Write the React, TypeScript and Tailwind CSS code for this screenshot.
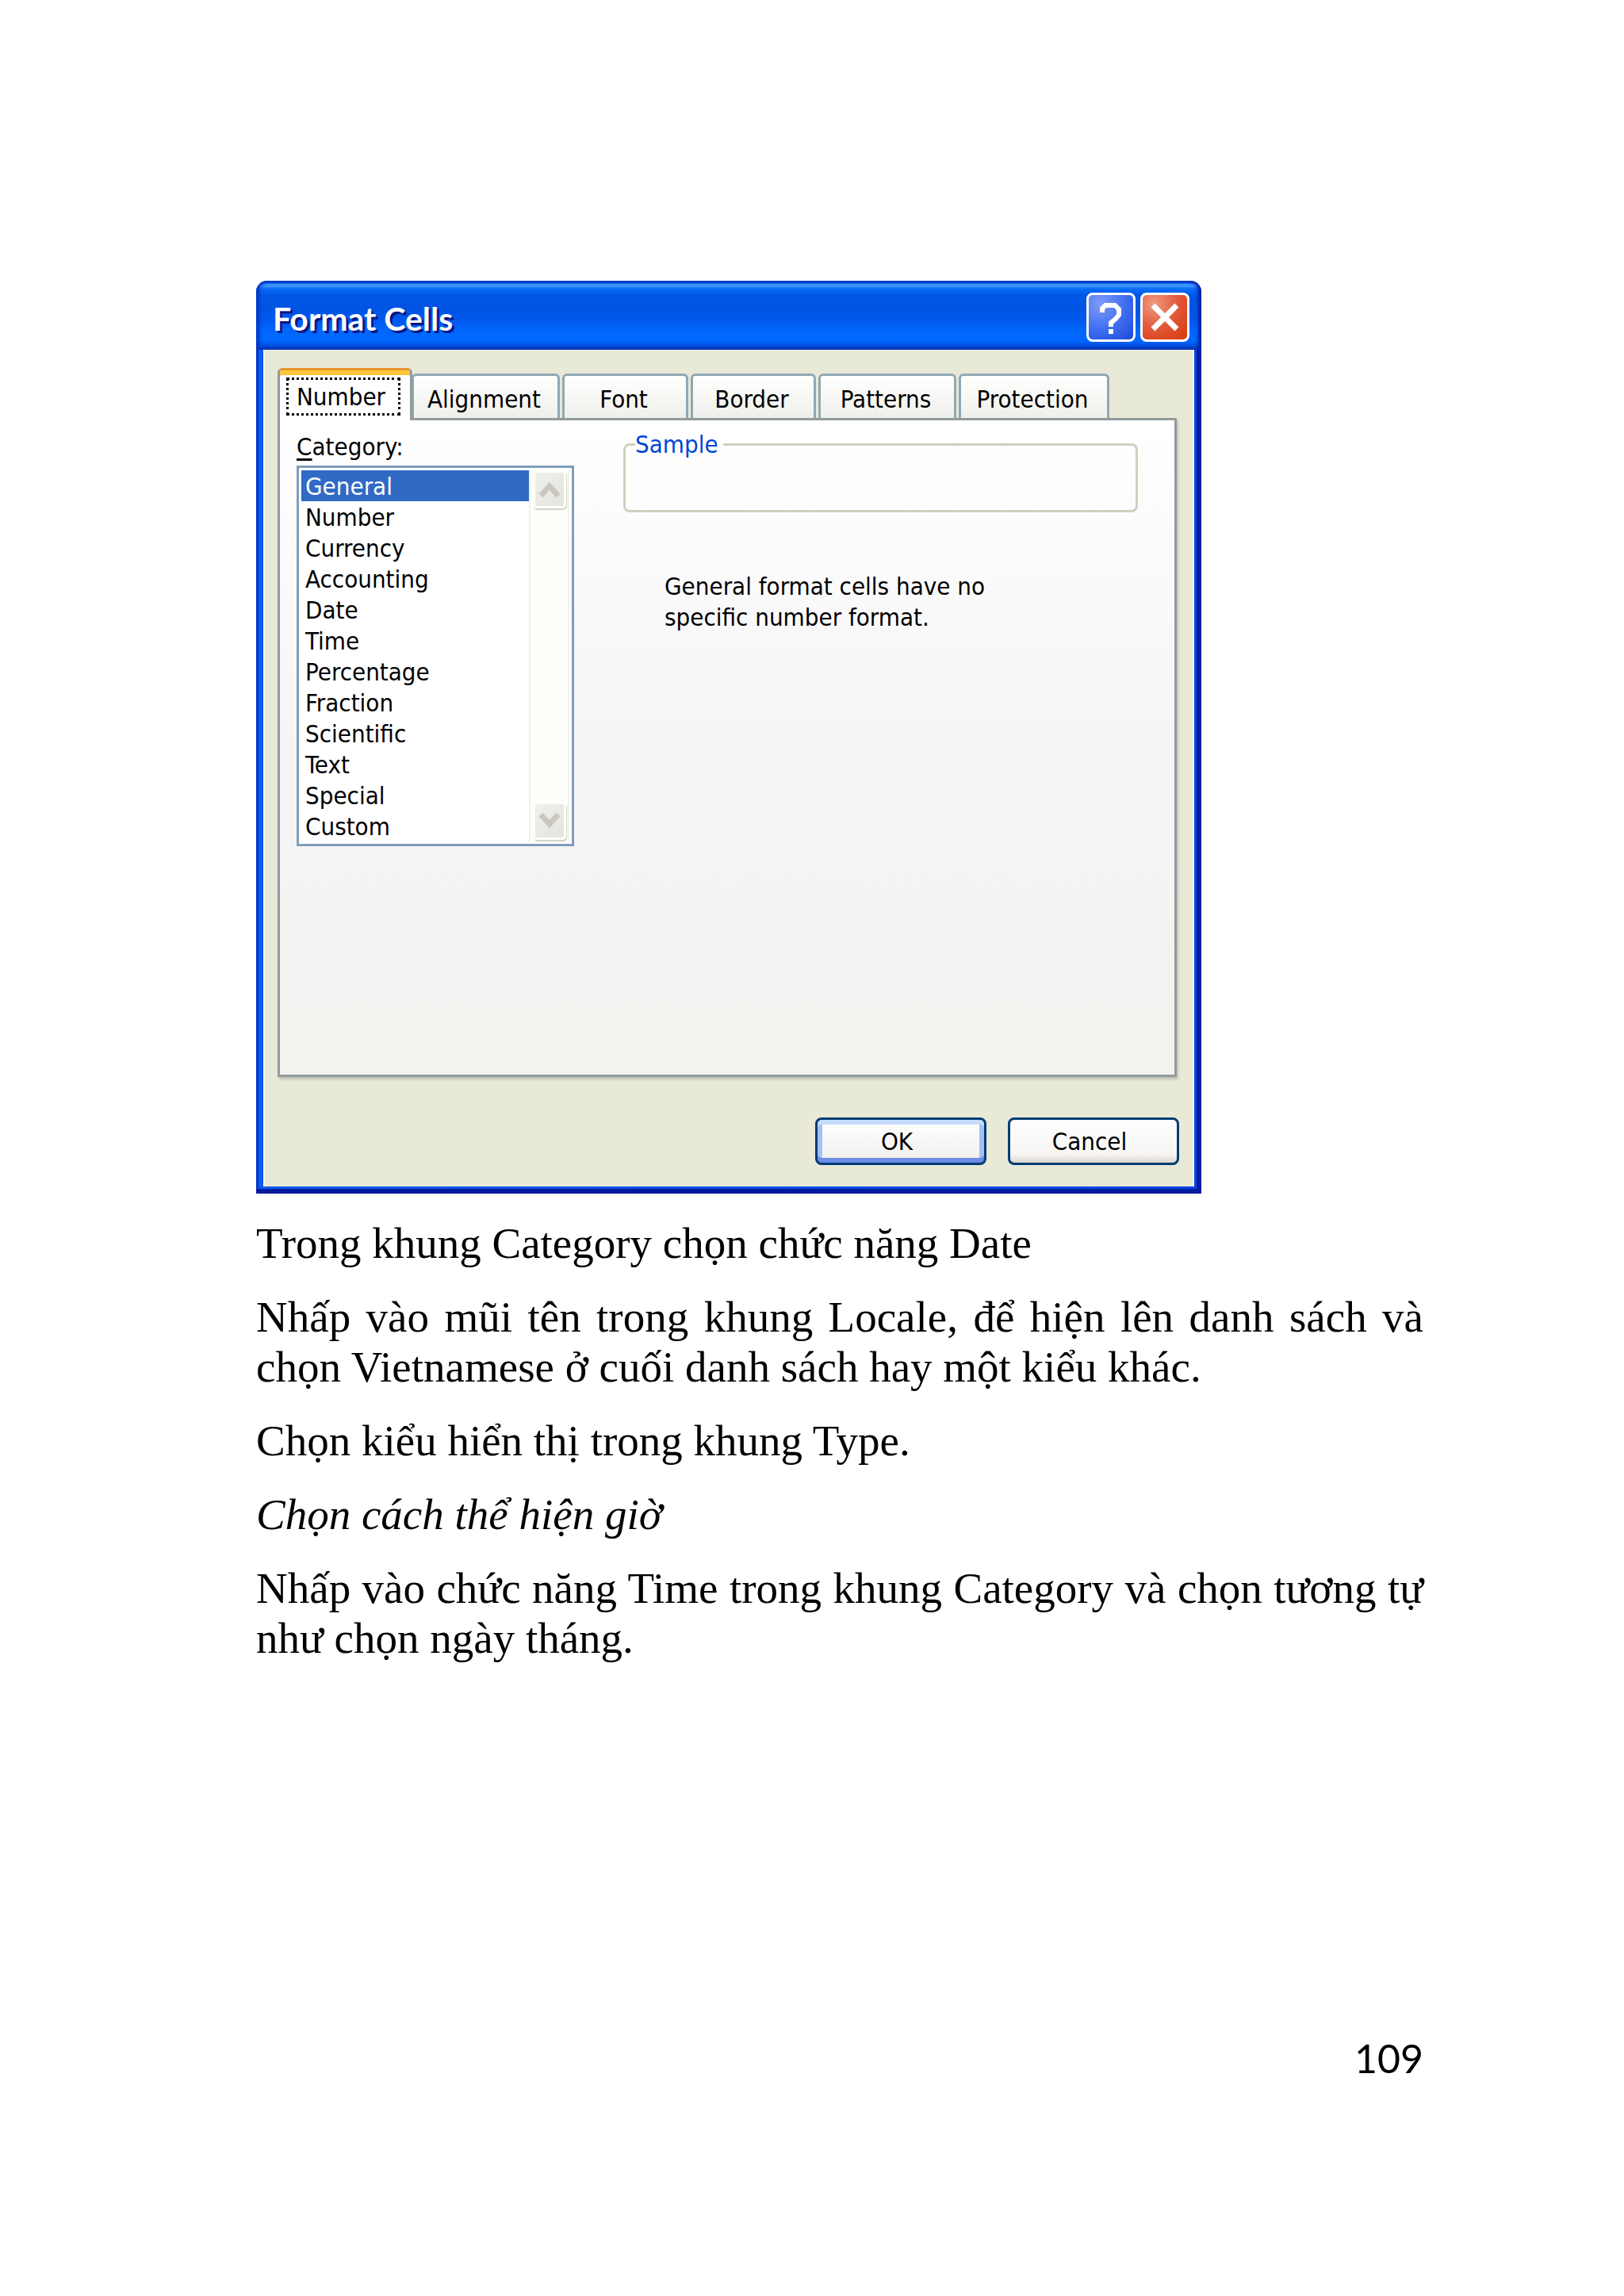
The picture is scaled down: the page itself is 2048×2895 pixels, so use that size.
import React from 'react';

const tabs = [
    { label: 'Alignment', width: 'w-[187px]' },
    { label: 'Font', width: 'w-[159px]' },
    { label: 'Border', width: 'w-[158px]' },
    { label: 'Patterns', width: 'w-[174px]' },
    { label: 'Protection', width: 'w-[190px]' },
];

const categories = [
    'General',
    'Number',
    'Currency',
    'Accounting',
    'Date',
    'Time',
    'Percentage',
    'Fraction',
    'Scientific',
    'Text',
    'Special',
    'Custom',
];

const TitleBar = () => (
    <div className="flex h-[87px] items-start justify-between rounded-t-[14px] bg-[linear-gradient(180deg,#0050d8_0px,#0050d8_3px,#3a93ff_4px,#3a93ff_7px,#0a6cf8_10px,#0058e6_18px,#0054e3_34px,#0058ee_50px,#0068ff_64px,#0066ff_76px,#0050dc_82px,#0038b8_87px)] pt-[15px] pr-[15px] pl-[21px] shadow-[inset_4px_0_4px_#0036c4,inset_-4px_0_4px_#001ea0]">
        <h1 className="pt-[7px] font-['Lato','Liberation_Sans',sans-serif] text-[41px] leading-[52px] font-bold text-white [text-shadow:3px_3px_0_#0a1883]">
            Format Cells
        </h1>
        <div className="flex gap-[6px]">
            <button
                aria-label="Help"
                className="flex size-[62px] items-center justify-center rounded-[8px] border-3 border-white bg-[radial-gradient(circle_at_25%_20%,#7d9cf8,#3d6cf0_55%,#1c4ad8)]"
            >
                <svg viewBox="0 0 56 56" className="size-[56px]" fill="none" stroke="white" strokeWidth="6">
                    <path d="M17 22v-5l4-4h12l5 5v7l-4 5-6 5v5" />
                    <path d="M25 46h6" />
                </svg>
            </button>
            <button
                aria-label="Close"
                className="flex size-[62px] items-center justify-center rounded-[8px] border-3 border-white bg-[radial-gradient(circle_at_25%_20%,#ee9a80,#e2573a_50%,#d63a08)]"
            >
                <svg viewBox="0 0 56 56" className="size-[56px]" fill="none" stroke="white" strokeWidth="7">
                    <path d="M13 13l30 30M43 13L13 43" />
                </svg>
            </button>
        </div>
    </div>
);

const ScrollArrow = ({ down = false }: { down?: boolean }) => (
    <button
        disabled
        aria-label={down ? 'Scroll down' : 'Scroll up'}
        className="flex h-[48px] w-[42px] items-center justify-center rounded-[5px] border-3 border-[#fdfdfb] bg-linear-to-br from-[#f1f1ec] to-[#e4e3dd] shadow-[1px_2px_1px_#d3d2c4]"
    >
        <svg viewBox="0 0 28 24" className="h-[24px] w-[28px]" fill="none" stroke="#c9c7bf" strokeWidth="7">
            <path d={down ? 'M3 4l11 12L25 4' : 'M3 20L14 8l11 12'} />
        </svg>
    </button>
);

const CategoryList = () => (
    <div className="w-[350px]">
        <label htmlFor="category" className="block">
            <span className="underline decoration-3 underline-offset-4">C</span>ategory:
        </label>
        <div className="mt-[4px] flex border-3 border-[#7f9db9] bg-white p-[3px]">
            <select
                id="category"
                size={12}
                defaultValue="General"
                className="h-[468px] flex-1 appearance-none overflow-hidden border-0 bg-white p-0 outline-none"
            >
                {categories.map((name) => (
                    <option
                        key={name}
                        className="h-[39px] min-h-0 px-[5px] pt-[2px] pb-[1px] leading-[36px] checked:bg-linear-to-r checked:from-[#316ac5] checked:to-[#316ac5] checked:[-webkit-text-fill-color:white]"
                    >
                        {name}
                    </option>
                ))}
            </select>
            <div className="flex w-[51px] flex-col items-center justify-between border-x-2 border-[#f1f0ea] bg-[#fefefb] pb-[2px]">
                <ScrollArrow />
                <ScrollArrow down />
            </div>
        </div>
    </div>
);

const FormatCells = () => (
    <section className="w-[1192px] max-w-full rounded-t-[14px] font-['DejaVu_Sans_Condensed','DejaVu_Sans',sans-serif] text-[31px] leading-[39px] text-black">
        <TitleBar />
        {/* Window frame: dark outer edge, lighter inner edge */}
        <div className="border-b-6 border-[#001ba0] bg-[linear-gradient(90deg,#0036cf_3px,#0e5bea_3px,#0a44e4_calc(100%-6px),#001ea4_calc(100%-6px))] px-[9px] pb-[3px]">
            <div className="border-x-2 border-[#f4f6ee] bg-[#e9e9d8] pt-[23px] pr-[20px] pb-[27px] pl-[16px]">
                {/* Tab strip */}
                <div role="tablist" className="flex items-end gap-[3px]">
                    <button
                        role="tab"
                        aria-selected="true"
                        className="relative z-10 -mr-[4px] -mb-[3px] h-[66px] w-[170px] rounded-t-[6px] border-x-3 border-t-3 border-x-[#919b9c] border-t-[#e5972d] bg-white pt-[9px] pr-[12px] pb-[6px] pl-[8px] shadow-[inset_0_6px_0_#ffc73c]"
                    >
                        <span className="flex h-[48px] items-center border-3 border-dotted border-black pl-[10px]">
                            Number
                        </span>
                    </button>
                    {tabs.map((tab) => (
                        <button
                            key={tab.label}
                            role="tab"
                            aria-selected="false"
                            className={`${tab.width} h-[56px] rounded-t-[6px] border-x-3 border-t-3 border-[#91a7b4] bg-linear-to-b from-white to-[#efefea] pt-[6px] pr-[4px]`}
                        >
                            {tab.label}
                        </button>
                    ))}
                </div>

                {/* Number page */}
                <div
                    role="tabpanel"
                    className="flex min-h-[831px] border-3 border-[#919b9c] bg-linear-to-b from-white via-[#f6f5f6] via-50% to-[#f2f2ef] pt-[14px] pr-[46px] pl-[21px] shadow-[2px_3px_3px_#c4c3b4]"
                >
                    <CategoryList />
                    <div className="ml-[62px] flex-1">
                        <fieldset className="h-[102px] rounded-[8px] border-3 border-[#d0d0bf] pl-[12px]">
                            <legend className="pr-[6px] leading-[33px] text-[#0046d5]">Sample</legend>
                        </fieldset>
                        <p className="mt-[74px] ml-[52px] w-[440px]">
                            General format cells have no specific number format.
                        </p>
                    </div>
                </div>

                <div className="-mr-[3px] mt-[51px] flex justify-end gap-[27px]">
                    <button className="h-[60px] w-[216px] rounded-[8px] border-3 border-[#003c74] bg-linear-to-b from-white to-[#f1efec] pr-[10px] shadow-[inset_0_6px_0_#c6dcfb,inset_0_-6px_0_#6a8be6,inset_6px_0_0_#a5c0f2,inset_-6px_0_0_#a5c0f2]">
                        OK
                    </button>
                    <button className="h-[60px] w-[216px] rounded-[8px] border-3 border-[#003c74] bg-linear-to-b from-white via-[#f6f5f3] via-80% to-[#dcd7ce] pr-[10px]">
                        Cancel
                    </button>
                </div>
            </div>
        </div>
    </section>
);

export default function App() {
    return (
        <main className="bg-white pt-[354px] pr-[253px] pb-[240px] pl-[323px] font-['Liberation_Serif',serif] text-[55px] leading-[63px] text-black">
            <FormatCells />

            <article className="mt-[31px] flex flex-col gap-[30px] text-justify">
                <p>Trong khung Category chọn chức năng Date</p>
                <p>
                    Nhấp vào mũi tên trong khung Locale, để hiện lên danh sách và chọn Vietnamese ở cuối
                    danh sách hay một kiểu khác.
                </p>
                <p>Chọn kiểu hiển thị trong khung Type.</p>
                <p className="italic">Chọn cách thể hiện giờ</p>
                <p>Nhấp vào chức năng Time trong khung Category và chọn tương tự như chọn ngày tháng.</p>
            </article>

            <footer className="mt-[468px] text-right font-['Lato',sans-serif] text-[50px] leading-[60px]">
                109
            </footer>
        </main>
    );
}
